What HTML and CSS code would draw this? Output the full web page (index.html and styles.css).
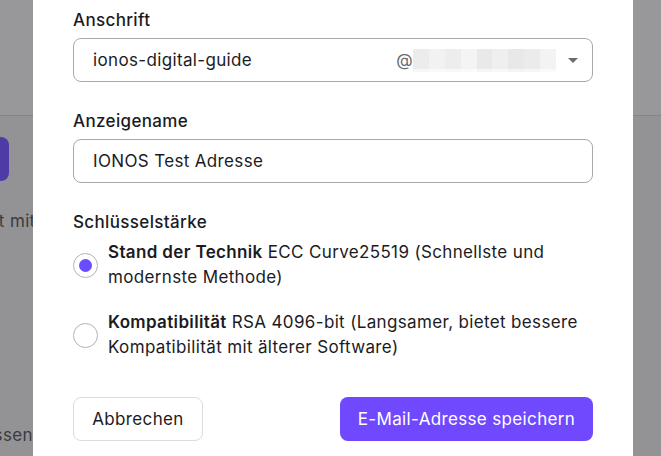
FILE: index.html
```html
<!DOCTYPE html>
<html lang="de">
<head>
<meta charset="utf-8">
<link rel="stylesheet" href="styles.css">
</head>
<body>
<div class="page">
  <div class="page-header"></div>
  <div class="page-btn"></div>
  <div class="page-text">Postfach erstellt mit</div>
  <div class="page-text lower">Zugriff anpassen</div>
</div>
<div class="modal">
  <label class="label">Anschrift</label>
  <div class="field select">
    <span class="value">ionos-digital-guide</span>
    <span class="at">@</span>
    <span class="blur">
      <span class="b b1"></span><span class="b b2"></span><span class="b b3"></span><span class="b b4"></span><span class="b b5"></span><span class="b b6"></span><span class="b b7"></span><span class="b b8"></span><span class="b b9"></span>
    </span>
    <span class="caret"></span>
  </div>

  <label class="label gap">Anzeigename</label>
  <div class="field">
    <span class="value">IONOS Test Adresse</span>
  </div>

  <div class="label gap">Schlüsselstärke</div>
  <div class="options">
    <div class="option">
      <span class="radio checked"></span>
      <p class="opt-text"><b>Stand der Technik</b> ECC Curve25519 (Schnellste und modernste Methode)</p>
    </div>
    <div class="option">
      <span class="radio"></span>
      <p class="opt-text"><b>Kompatibilität</b> RSA 4096-bit (Langsamer, bietet bessere Kompatibilität mit älterer Software)</p>
    </div>
  </div>

  <div class="actions">
    <button class="btn secondary">Abbrechen</button>
    <button class="btn primary">E-Mail-Adresse speichern</button>
  </div>
</div>
</body>
</html>
```

FILE: styles.css
```css
* { box-sizing: border-box; }
html, body { margin: 0; padding: 0; }
body {
  width: 661px;
  height: 456px;
  overflow: hidden;
  background: #939396;
  font-family: Inter, "Noto Sans", sans-serif;
  letter-spacing: 0.35px;
  color: #1b1b1f;
  position: relative;
}
.page {
  display: flex;
  flex-direction: column;
}
.page-header {
  height: 116px;
  border-bottom: 1px solid #858589;
  background: #98989b;
}
.page-btn {
  margin-top: 21px;
  margin-left: -91px;
  width: 100px;
  height: 44px;
  border-radius: 8px;
  background: #4f3ba5;
}
.page-text {
  margin-top: 28px;
  margin-left: -131px;
  font-size: 17px;
  line-height: 24px;
  color: #3b3b3f;
  white-space: nowrap;
}
.page-text.lower {
  margin-top: 190px;
  margin-left: -109px;
}
.modal {
  position: absolute;
  left: 33px;
  top: 0;
  width: 600px;
  height: 470px;
  background: #fff;
  padding: 8px 40px 0 40px;
  display: flex;
  flex-direction: column;
}
.label {
  display: block;
  font-size: 17px;
  line-height: 24px;
  font-weight: 500;
  color: #1b1b1f;
}
.label.gap { margin-top: 27px; }
.field {
  margin-top: 6px;
  height: 44px;
  border: 1px solid #a9a9ad;
  border-radius: 8px;
  display: flex;
  align-items: center;
  padding: 0 14px 0 19px;
  font-size: 17px;
  color: #1b1b1f;
}
.field .value { flex: 1; }
.select .at {
  color: #6b6b70;
  font-size: 17px;
}
.blur {
  display: flex;
  width: 143px;
  height: 23px;
  margin-right: 12px;
}
.b { flex: 1; height: 100%; }
.b1 { background: linear-gradient(#ececec 85%, #f6f6f6 85%); }
.b2 { background: linear-gradient(#f2f2f2 85%, #f9f9f9 85%); }
.b3 { background: linear-gradient(#ededed 85%, #f7f7f7 85%); }
.b4 { background: linear-gradient(#f4f4f4 85%, #fafafa 85%); }
.b5 { background: linear-gradient(#e9e9e9 85%, #f5f5f5 85%); }
.b6 { background: linear-gradient(#efefef 85%, #f8f8f8 85%); }
.b7 { background: linear-gradient(#e8e8e8 85%, #f4f4f4 85%); }
.b8 { background: linear-gradient(#ebebeb 85%, #f6f6f6 85%); }
.b9 { background: linear-gradient(#f3f3f3 85%, #fafafa 85%); }
.caret {
  width: 0;
  height: 0;
  border-left: 5px solid transparent;
  border-right: 5px solid transparent;
  border-top: 5px solid #6b6b70;
}
.options {
  margin-top: 6px;
  display: flex;
  flex-direction: column;
  gap: 20px;
}
.option {
  display: flex;
  align-items: center;
  gap: 10px;
}
.radio {
  flex: none;
  width: 25px;
  height: 25px;
  border-radius: 50%;
  border: 1px solid #b3b3b7;
  background: #fff;
  display: flex;
  align-items: center;
  justify-content: center;
}
.radio.checked::after {
  content: "";
  width: 13px;
  height: 13px;
  border-radius: 50%;
  background: #6a4cff;
}
.opt-text {
  margin: 0;
  font-size: 17px;
  line-height: 25px;
  color: #1b1b1f;
}
.opt-text b { font-weight: 600; }
.actions {
  margin-top: 37px;
  display: flex;
  justify-content: space-between;
}
.btn {
  height: 44px;
  border-radius: 8px;
  font-family: Inter, "Noto Sans", sans-serif;
  letter-spacing: 0.35px;
  font-size: 17px;
  padding: 0;
  white-space: nowrap;
  cursor: pointer;
}
.btn.secondary {
  width: 130px;
  background: #fff;
  border: 1px solid #dcdce0;
  color: #1b1b1f;
}
.btn.primary {
  width: 253px;
  background: #7049ff;
  border: none;
  color: #fff;
}
```
